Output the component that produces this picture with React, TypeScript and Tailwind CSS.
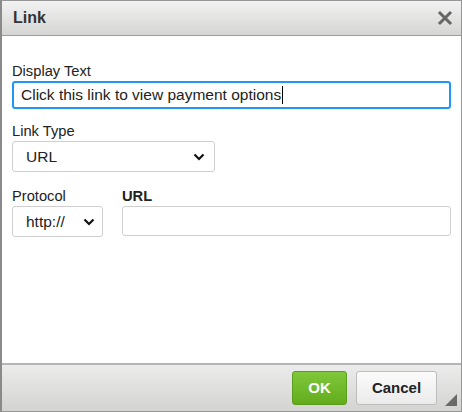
import React from 'react';

const Chevron: React.FC = () => (
  <svg width="12" height="8" viewBox="0 0 12 8" className="shrink-0">
    <path d="M1.5 1.5 L6 6 L10.5 1.5" fill="none" stroke="#111" strokeWidth="2.2" />
  </svg>
);

const App: React.FC = () => {
  return (
    <div className="w-[462px] h-[412px] bg-white flex flex-col border border-[#979797] border-l-2 border-l-[#8a8a8a] font-['Liberation_Sans',Arial,sans-serif] text-[#222]">
      {/* Header */}
      <div className="h-[35px] shrink-0 flex items-center justify-between pl-[11px] pr-[8px] bg-gradient-to-b from-[#f2f2f2] to-[#d5d5d3] border-b border-[#9d9d9d]">
        <span className="text-[16px] font-bold text-[#333]">Link</span>
        <svg width="16" height="16" viewBox="0 0 16 16">
          <path d="M3 3 L13 13 M13 3 L3 13" stroke="#666" strokeWidth="3" strokeLinecap="square" />
        </svg>
      </div>

      {/* Body */}
      <div className="flex-1 flex flex-col px-[10px] pt-[26px]">
        <label className="text-[14.7px] leading-[18px] text-[#222]">Display Text</label>
        <div className="mt-[1px] h-[28px] border-2 border-[#2196f3] rounded-[3px] flex items-center pl-[7px]">
          <span className="text-[15.5px] text-[#222]">Click this link to view payment options</span>
          <span className="w-[1px] h-[18px] bg-black ml-[1px]" />
        </div>

        <label className="mt-[13px] text-[14.7px] leading-[18px]">Link Type</label>
        <div className="mt-[1px] w-[203px] h-[31px] border border-[#cfcfcf] rounded-[3px] flex items-center justify-between pl-[13px] pr-[9px]">
          <span className="text-[15.5px]">URL</span>
          <Chevron />
        </div>

        <div className="mt-[15px] flex gap-[19px]">
          <div className="flex flex-col">
            <label className="text-[14.7px] leading-[18px]">Protocol</label>
            <div className="mt-[1px] w-[91px] h-[31px] border border-[#cfcfcf] rounded-[3px] flex items-center justify-between pl-[13px] pr-[7px]">
              <span className="text-[15.5px]">http://</span>
              <Chevron />
            </div>
          </div>
          <div className="flex flex-col flex-1">
            <label className="text-[14.7px] leading-[18px] font-bold">URL</label>
            <div className="mt-[1px] h-[30px] border border-[#cfcfcf] rounded-[3px]" />
          </div>
        </div>
      </div>

      {/* Footer */}
      <div className="h-[48px] shrink-0 relative flex items-center justify-end gap-[9px] pr-[24px] bg-gradient-to-b from-[#ececec] to-[#d3d3d1] border-t-2 border-[#b5b5b5]">
        <button className="w-[55px] h-[34px] rounded-[3px] border border-[#5a9e1c] bg-gradient-to-b from-[#80c83a] to-[#62ac1c] text-white font-bold text-[15px]">
          OK
        </button>
        <button className="w-[81px] h-[34px] rounded-[3px] border border-[#bdbdbd] bg-gradient-to-b from-[#fbfbfb] to-[#ebebeb] text-[#222] font-bold text-[15px]">
          Cancel
        </button>
        <svg width="12" height="12" viewBox="0 0 12 12" className="absolute right-[4px] bottom-[5px]">
          <path d="M12 0 L12 12 L0 12 Z" fill="#6a6a6a" />
        </svg>
      </div>
    </div>
  );
};

export default App;
